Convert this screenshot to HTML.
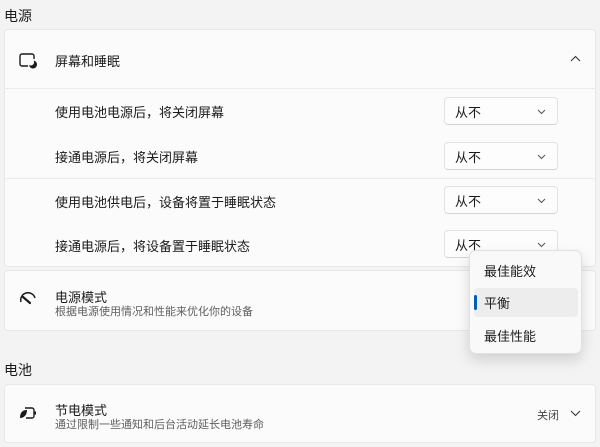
<!DOCTYPE html>
<html><head><meta charset="utf-8"><style>
*{margin:0;padding:0;box-sizing:border-box}
body{width:600px;height:447px;background:#f3f3f3;font-family:"Liberation Sans","Noto Sans CJK SC",sans-serif;color:#1b1b1b;position:relative;overflow:hidden;font-size:13px}
.abs{position:absolute}
.card{position:absolute;left:4px;width:592px;background:#fbfbfb;border:1px solid #e8e8e8;border-radius:4px}
.h{font-size:14px}
.dd{position:absolute;left:444px;width:114px;height:28px;background:#fdfdfd;border:1px solid #e2e2e2;border-bottom-color:#d4d4d4;border-radius:4px;font-size:13px;padding:4px 0 0 10px}
.dd svg{position:absolute;right:11px;top:11px}
.sep{position:absolute;left:4px;width:592px;height:1px;background:#ebebeb}
.sub{font-size:11px;color:#5f5f5f}
</style></head><body>
<div class="abs h" style="left:4px;top:6px">电源</div>
<div class="card" style="top:29px;height:238px"></div>
<div class="sep" style="top:88px"></div>
<div class="sep" style="top:178px"></div>
<svg class="abs" style="left:19px;top:53px" width="19" height="16" viewBox="0 0 19 16"><path d="M9 13H3a2 2 0 0 1-2-2V3a2 2 0 0 1 2-2h10a2 2 0 0 1 2 2v3" fill="none" stroke="#1b1b1b" stroke-width="1.4"/><circle cx="14" cy="11.5" r="4" fill="#1b1b1b"/><circle cx="11.8" cy="9.2" r="3.3" fill="#fbfbfb"/></svg>
<div class="abs" style="left:55px;top:51px">屏幕和睡眠</div>
<svg class="abs" style="left:570px;top:55px" width="11" height="7" viewBox="0 0 11 7"><path d="M1 6l4.5-4.5L10 6" fill="none" stroke="#333" stroke-width="1.1"/></svg>
<div class="abs" style="left:55px;top:102px">使用电池电源后，将关闭屏幕</div>
<div class="abs" style="left:55px;top:147px">接通电源后，将关闭屏幕</div>
<div class="abs" style="left:55px;top:192px">使用电池供电后，设备将置于睡眠状态</div>
<div class="abs" style="left:55px;top:236px">接通电源后，将设备置于睡眠状态</div>
<div class="dd" style="top:97px">从不<svg width="9" height="6" viewBox="0 0 9 6"><path d="M1 1l3.5 3.5L8 1" fill="none" stroke="#555" stroke-width="1"/></svg></div>
<div class="dd" style="top:142px">从不<svg width="9" height="6" viewBox="0 0 9 6"><path d="M1 1l3.5 3.5L8 1" fill="none" stroke="#555" stroke-width="1"/></svg></div>
<div class="dd" style="top:186px">从不<svg width="9" height="6" viewBox="0 0 9 6"><path d="M1 1l3.5 3.5L8 1" fill="none" stroke="#555" stroke-width="1"/></svg></div>
<div class="dd" style="top:230px">从不<svg width="9" height="6" viewBox="0 0 9 6"><path d="M1 1l3.5 3.5L8 1" fill="none" stroke="#555" stroke-width="1"/></svg></div>

<div class="card" style="top:270px;height:61px"></div>
<svg class="abs" style="left:19px;top:292px" width="18" height="14" viewBox="0 0 18 14"><path d="M2 10A7 7 0 0 1 16 6" fill="none" stroke="#1b1b1b" stroke-width="1.5"/><path d="M4 5l7 6" stroke="#1b1b1b" stroke-width="2.2" stroke-linecap="round"/></svg>
<div class="abs" style="left:55px;top:287px">电源模式</div>
<div class="abs sub" style="left:55px;top:303px">根据电源使用情况和性能来优化你的设备</div>

<div class="abs h" style="left:4px;top:360px">电池</div>
<div class="card" style="top:384px;height:59px"></div>
<svg class="abs" style="left:19px;top:406px" width="18" height="14" viewBox="0 0 18 14"><path d="M6 2h7a2 2 0 0 1 2 2v6a2 2 0 0 1-2 2H7" fill="none" stroke="#1b1b1b" stroke-width="1.4"/><path d="M15.5 5.5h1.5v3h-1.5" fill="#1b1b1b"/><path d="M1 12C1 7 3 4 8 4c0 5-3 8-7 8z" fill="#1b1b1b"/></svg>
<div class="abs" style="left:55px;top:400px">节电模式</div>
<div class="abs sub" style="left:55px;top:416px">通过限制一些通知和后台活动延长电池寿命</div>
<div class="abs sub" style="left:537px;top:407px;font-size:11px;color:#444">关闭</div>
<svg class="abs" style="left:570px;top:410px" width="11" height="7" viewBox="0 0 11 7"><path d="M1 1l4.5 4.5L10 1" fill="none" stroke="#333" stroke-width="1.1"/></svg>

<div class="abs" style="left:469px;top:250px;width:113px;height:104px;background:#f9f9f9;border:1px solid #e0e0e0;border-radius:7px;box-shadow:0 6px 14px rgba(0,0,0,.14)"></div>
<div class="abs" style="left:474px;top:288px;width:104px;height:29px;background:#ededed;border-radius:4px"></div>
<div class="abs" style="left:474px;top:295px;width:3px;height:15px;background:#005fb8;border-radius:2px"></div>
<div class="abs" style="left:484px;top:261px">最佳能效</div>
<div class="abs" style="left:484px;top:293px">平衡</div>
<div class="abs" style="left:484px;top:326px">最佳性能</div>
</body></html>
